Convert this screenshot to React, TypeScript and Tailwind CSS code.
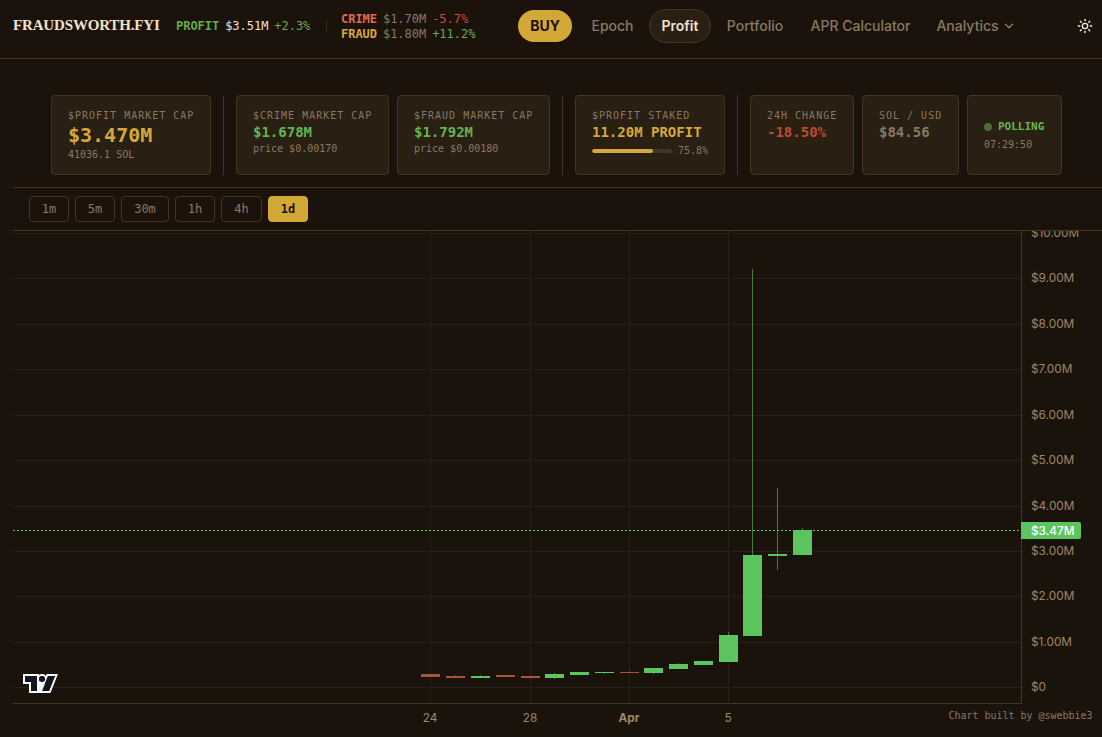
import { ChevronDown, Sun } from "lucide-react";

type Candle = { x: number; top: number; bottom: number; high?: number; low?: number; down?: boolean };

const candles: Candle[] = [
  { x: 421, top: 674, bottom: 677, down: true },
  { x: 446, top: 676, bottom: 678, high: 675, down: true },
  { x: 471, top: 676, bottom: 678, high: 675 },
  { x: 496, top: 675, bottom: 677, down: true },
  { x: 521, top: 676, bottom: 678, down: true },
  { x: 545, top: 674, bottom: 678, high: 673, low: 679 },
  { x: 570, top: 672, bottom: 675 },
  { x: 595, top: 672, bottom: 673, low: 674 },
  { x: 620, top: 672, bottom: 673, high: 671, down: true },
  { x: 644, top: 668, bottom: 673, low: 674 },
  { x: 669, top: 664, bottom: 669, high: 663 },
  { x: 694, top: 661, bottom: 665 },
  { x: 719, top: 635, bottom: 662, high: 632 },
  { x: 743, top: 555, bottom: 636, high: 269 },
  { x: 768, top: 554, bottom: 556, high: 488, low: 570 },
  { x: 793, top: 530, bottom: 555, high: 528 },
];

const priceTicks = [
  { y: 233, label: "$10.00M" },
  { y: 278, label: "$9.00M" },
  { y: 324, label: "$8.00M" },
  { y: 369, label: "$7.00M" },
  { y: 415, label: "$6.00M" },
  { y: 460, label: "$5.00M" },
  { y: 506, label: "$4.00M" },
  { y: 551, label: "$3.00M" },
  { y: 596, label: "$2.00M" },
  { y: 642, label: "$1.00M" },
  { y: 687, label: "$0" },
];

const timeTicks = [
  { x: 430, label: "24" },
  { x: 530, label: "28" },
  { x: 629, label: "Apr", bold: true },
  { x: 728, label: "5" },
];

const intervals = [
  { label: "1m", cls: "w-10" },
  { label: "5m", cls: "w-10" },
  { label: "30m", cls: "w-12" },
  { label: "1h", cls: "w-10" },
  { label: "4h", cls: "w-[41px]" },
  { label: "1d", cls: "w-10", active: true },
];

function Header() {
  const link = "flex h-8 items-center justify-center rounded-full";

  return (
    <header className="flex h-[59px] items-start border-b border-[#44321f] pt-[9px]">
      <div className="ml-[13px] flex h-8 w-[163px] items-center whitespace-nowrap font-['Liberation_Serif',serif] text-[15px] font-bold tracking-[-0.16px] text-[#f0e2cb]">
        FRAUDSWORTH.FYI
      </div>
      <div className="flex h-[34px] w-[150px] items-center gap-[6px] text-[12px] tracking-[-0.03px]">
        <b className="text-[#63ad50]">PROFIT</b>
        <span className="font-medium text-[#f0e2cb]">$3.51M</span>
        <span className="text-[#63ad50]">+2.3%</span>
      </div>
      <div className="mt-[11px] h-3 w-px bg-[#392b1d]" />
      <div className="ml-[14px] mt-[3px] w-[177px] text-[12px] leading-[15px] tracking-[-0.03px] text-[#8a7961]">
        <div className="flex gap-[6px]">
          <b className="text-[#e06a50]">CRIME</b>
          <span>$1.70M</span>
          <span className="text-[#c25039]">-5.7%</span>
        </div>
        <div className="flex gap-[6px]">
          <b className="text-[#d4a93a]">FRAUD</b>
          <span>$1.80M</span>
          <span className="text-[#63ad50]">+11.2%</span>
        </div>
      </div>
      <nav className="flex items-center gap-1 font-['Inter',sans-serif] text-[14px] font-medium text-[#8a7961]">
        <a className="mr-[3px] flex h-8 w-[54px] items-center justify-center rounded-full bg-[#d2a837] pb-px font-bold text-[#1c120c]">
          BUY
        </a>
        <a className={`${link} w-[67px] pb-px`}>Epoch</a>
        <a className="-ml-px flex h-[34px] w-[62px] items-center justify-center rounded-full border border-[#44351f] bg-[#291f13] pb-px font-semibold text-[#f0e2cb]">
          Profit
        </a>
        <a className={`${link} w-20 pb-px`}>Portfolio</a>
        <a className={`${link} w-[123px] pb-px`}>APR Calculator</a>
        <a className={`${link} w-[100px] gap-[3px] pb-px`}>
          Analytics <ChevronDown size={14} strokeWidth={2.5} />
        </a>
      </nav>
      <Sun size={16} className="ml-auto mr-[9px] mt-[9px] text-[#f7efe2]" />
    </header>
  );
}

function Card({ label, value, cls, note, width }: { label: string; value: string; cls: string; note?: string; width: string }) {
  return (
    <div className={`${width} shrink-0 rounded-[4px] border border-[#44351f] bg-[#291f13] px-4 pt-[12px] whitespace-nowrap`}>
      <div className="text-[10px] leading-[15px] tracking-[1px]">{label}</div>
      <div className={`font-bold ${cls}`}>{value}</div>
      {note && <div className="text-[10px] leading-[15px]">{note}</div>}
    </div>
  );
}

function Divider() {
  return <div className="mx-1 w-px shrink-0 bg-[#44351f]" />;
}

function Stats() {
  return (
    <section className="ml-[51px] mt-9 flex h-20 gap-2 text-[#8a7961]">
      <Card width="w-40" label="$PROFIT MARKET CAP" value="$3.470M" cls="text-[20px] leading-6 text-[#d4a93a]" note="41036.1 SOL" />
      <Divider />
      <Card width="w-[153px]" label="$CRIME MARKET CAP" value="$1.678M" cls="text-[14px] leading-[18px] text-[#63b552]" note="price $0.00170" />
      <Card width="w-[153px]" label="$FRAUD MARKET CAP" value="$1.792M" cls="text-[14px] leading-[18px] text-[#63b552]" note="price $0.00180" />
      <Divider />
      <div className="w-[150px] shrink-0 whitespace-nowrap rounded-[4px] border border-[#44351f] bg-[#291f13] px-4 pt-[12px]">
        <div className="text-[10px] leading-[15px] tracking-[1px]">$PROFIT STAKED</div>
        <div className="text-[14px] font-bold leading-[18px] text-[#d4a93a]">11.20M PROFIT</div>
        <div className="mt-[2px] flex items-center gap-[6px] text-[10px] leading-[15px]">
          <div className="h-1 w-20 overflow-hidden rounded-full bg-[#453522]">
            <div className="h-full w-[61px] rounded-full bg-[#d4a93a]" />
          </div>
          75.8%
        </div>
      </div>
      <Divider />
      <Card width="w-[104px]" label="24H CHANGE" value="-18.50%" cls="text-[14px] leading-[18px] text-[#bd4a31]" />
      <Card width="w-[97px]" label="SOL / USD" value="$84.56" cls="text-[14px] leading-[18px]" />
      <div className="flex w-[95px] shrink-0 flex-col justify-center rounded-[4px] border border-[#44351f] bg-[#291f13] px-4">
        <div className="flex items-center gap-[6px] text-[11px] font-bold leading-[17px] text-[#63b552]">
          <span className="h-2 w-2 shrink-0 rounded-full bg-[#4d6a38]" />
          POLLING
        </div>
        <div className="mt-[2px] text-[10px] leading-[15px]">07:29:50</div>
      </div>
    </section>
  );
}

function Chart() {
  return (
    <svg viewBox="0 231 1102 506" className="block h-[506px] w-[1102px] font-['Inter',sans-serif]" fontSize="11.8" fill="#a08565">
      <rect x="13" y="231" width="1089" height="506" fill="#1a130c" />
      {/* grid */}
      {priceTicks.map((t) => (
        <g key={t.label}>
          <rect x="13" y={t.y} width="1008" height="1" fill="#2a1f14" />
          <text x="1031" y={t.y + 4.4}>{t.label}</text>
        </g>
      ))}
      {timeTicks.map((t) => (
        <g key={t.label}>
          <rect x={t.x} y="231" width="1" height="472" fill="#2a1f14" />
          <text x={t.x} y="722" textAnchor="middle" fontWeight={t.bold ? 700 : 400}>{t.label}</text>
        </g>
      ))}
      <rect x="13" y="703" width="1009" height="1" fill="#44351f" />
      <rect x="1021" y="231" width="1" height="473" fill="#44351f" />

      {/* candles */}
      {candles.map((c) => {
        const color = c.down ? "#ab513d" : "#5dc560";
        const high = c.high ?? c.top;
        const low = c.low ?? c.bottom;
        return (
          <g key={c.x} fill={color}>
            <rect x={c.x + 9} y={high} width="1" height={low - high} opacity="0.6" />
            <rect x={c.x} y={c.top} width="19" height={c.bottom - c.top} />
          </g>
        );
      })}

      {/* last price */}
      <line x1="13" x2="1021" y1="530.5" y2="530.5" stroke="#5dc560" strokeDasharray="2 2" />
      <path d="M1021 522h58a2 2 0 0 1 2 2v13a2 2 0 0 1-2 2h-58z" fill="#5dc560" />
      <text x="1031" y="535" fill="#fff" fontWeight="500">$3.47M</text>

      <g transform="translate(23 674)" fillRule="evenodd">
        <path
          fill="#fff"
          d="M2 0H0v10h6v9h21.4l.5-1.3 6-15 1-2.7H23.7l-.5 1.3-.2.6a5 5 0 0 0-7-.9V0H2Zm20 17h4l5.2-13 .8-2h-7l-1 2.5-.2.5-1.5 3.8-.3.7V17Zm-.8-10a3 3 0 0 0 .7-2.7A3 3 0 1 0 16.8 7h4.4ZM14 7V2H2v6h6v9h4V7h2Z"
        />
        <path fill="#131722" d="M14 2H2v6h6v9h6V2Zm12 15h-7l6-15h7l-6 15Zm-7-9a3 3 0 1 0 0-6 3 3 0 0 0 0 6Z" />
      </g>
      <text x="948.5" y="719" className="font-['DejaVu_Sans_Mono',monospace]" fontSize="9.97" fill="#8a7961">
        Chart built by @swebbie3
      </text>
    </svg>
  );
}

export default function App() {
  return (
    <div className="h-[737px] w-[1102px] overflow-hidden bg-[#1c120c] font-['DejaVu_Sans_Mono',monospace]">
      <Header />
      <Stats />
      <div className="ml-[13px] mt-3 flex h-11 gap-[6px] border-y border-[#44351f] pl-4 pt-2">
        {intervals.map((i) => (
          <button
            key={i.label}
            className={`${i.cls} h-[26px] rounded-[4px] border text-[12px] ${
              i.active ? "border-[#d2a837] bg-[#d2a837] font-bold text-[#1c120c]" : "border-[#44351f] text-[#8a7961]"
            }`}
          >
            {i.label}
          </button>
        ))}
      </div>
      <Chart />
    </div>
  );
}
